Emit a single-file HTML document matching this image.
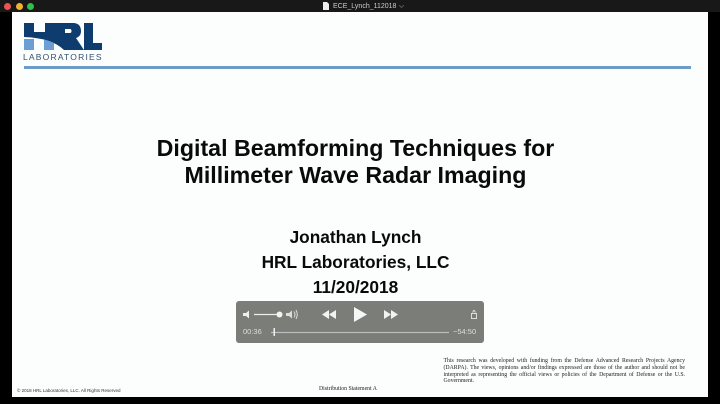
<!DOCTYPE html>
<html><head><meta charset="utf-8">
<style>
html,body{margin:0;padding:0;background:#000}
#r{position:relative;width:720px;height:404px;overflow:hidden;background:#000;font-family:"Liberation Sans",sans-serif}
.t{position:absolute;white-space:nowrap;line-height:1}
.c{left:0;width:711px;text-align:center;font-weight:bold;color:#0a0a0a}
.s{font-family:"Liberation Serif",serif;color:#222}
.w{color:#ddd;font-size:7.5px}
.j{position:absolute;left:443.500px;width:241.500px;font-family:"Liberation Serif",serif;color:#222;font-size:5.800px;line-height:7px;height:7px;text-align:justify;text-align-last:justify;white-space:normal}
</style></head><body><div id="r">
<div style="position:absolute;left:0;top:0;width:720px;height:12px;background:#181818"></div>
<div style="position:absolute;left:12px;top:12px;width:696px;height:385px;background:#fbfefd"></div>
<div style="position:absolute;left:4px;top:2.500px;width:7px;height:7px;border-radius:50%;background:#f0524f"></div>
<div style="position:absolute;left:15.500px;top:2.500px;width:7px;height:7px;border-radius:50%;background:#f5b02e"></div>
<div style="position:absolute;left:27px;top:2.500px;width:7px;height:7px;border-radius:50%;background:#2fbf4a"></div>
<svg style="position:absolute;left:323px;top:2px" width="6" height="8"><path d="M0 0H4L6 2V8H0Z" fill="#eee"/></svg>
<div class="t" style="left:333px;top:3px;font-size:7px;color:#ccc">ECE_Lynch_112018</div>
<svg style="position:absolute;left:399px;top:5px" width="5" height="3"><path d="M0 0L2.500 2.500L5 0" stroke="#555" fill="none"/></svg>
<svg style="position:absolute;left:0;top:0" width="120" height="70">
<path d="M24 23H34V32H45V23H73C80 23 81 28 81 31C81 35 79 37 76 38L84 50H64Q52 38 24 37ZM65 29V33H70C72 33 72 29 70 29Z" fill="#0f3c6e" fill-rule="evenodd"/>
<path d="M84 23H93V43H102V50H84Z" fill="#0f3c6e"/>
<path d="M24 39H34V50H24ZM44 39.500Q50 41 54 43V50H44Z" fill="#6b9fd4"/>
</svg>
<div class="t" style="left:23px;top:53px;font-size:8.500px;letter-spacing:1.200px;color:#33506f">LABORATORIES</div>
<div style="position:absolute;left:24px;top:66px;width:667px;height:3px;background:#6f9bc8"></div>
<div class="t c" style="top:137px;font-size:23.200px">Digital Beamforming Techniques for</div>
<div class="t c" style="top:163.500px;font-size:23.200px">Millimeter Wave Radar Imaging</div>
<div class="t c" style="top:229px;font-size:17.300px">Jonathan Lynch</div>
<div class="t c" style="top:254px;font-size:17.300px">HRL Laboratories, LLC</div>
<div class="t c" style="top:279px;font-size:17.300px">11/20/2018</div>
<div style="position:absolute;left:236px;top:301px;width:248px;height:42px;border-radius:3px;background:#7b7d79"></div>
<svg style="position:absolute;left:236px;top:301px" width="248" height="42">
<path d="M7 12H10L13 9.500V17.500L10 15H7Z" fill="#eee"/>
<path d="M18 13.500H43" stroke="#eee" stroke-width="1.200"/><circle cx="43.500" cy="13.500" r="3" fill="#f4f4f4"/>
<path d="M50 12H53L56 9.500V17.500L53 15H50Z" fill="#ddd"/>
<path d="M58 10.500Q60 13.500 58 16.500M60 9Q62.500 13.500 60 18" stroke="#ddd" fill="none"/>
<path d="M100 9V18L93 13.500ZM93 9V18L86 13.500Z" fill="#f2f2f2"/>
<path d="M118 6V21L131 13.500Z" fill="#f6f6f6"/>
<path d="M148 9V18L155 13.500ZM155 9V18L162 13.500Z" fill="#f2f2f2"/>
<path d="M235.500 12.500H240.500V17.500H235.500Z M238 9L236.500 11.500M238 9L239.500 11.500" stroke="#ddd" fill="none"/>
<path d="M35 31.500H213" stroke="#bdbdbd" stroke-width="1.200"/>
<rect x="37.500" y="27" width="1.500" height="8" fill="#eee"/>
</svg>
<div class="t w" style="left:243px;top:328px">00:36</div>
<div class="t w" style="left:453px;top:328px">−54:50</div>
<div class="j" style="top:357.500px">This research was developed with funding from the Defense Advanced Research Projects Agency</div>
<div class="j" style="top:364.500px">(DARPA). The views, opinions and/or findings expressed are those of the author and should not be</div>
<div class="j" style="top:371.500px">interpreted as representing the official views or policies of the Department of Defense or the U.S.</div>
<div class="t s" style="left:443.500px;top:379px;font-size:5.800px">Government.</div>
<div class="t" style="left:17px;top:389px;font-size:4.500px;color:#333">© 2018 HRL Laboratories, LLC. All Rights Reserved</div>
<div class="t s" style="left:319px;top:387px;font-size:5.800px">Distribution Statement A</div>
</div></body></html>
